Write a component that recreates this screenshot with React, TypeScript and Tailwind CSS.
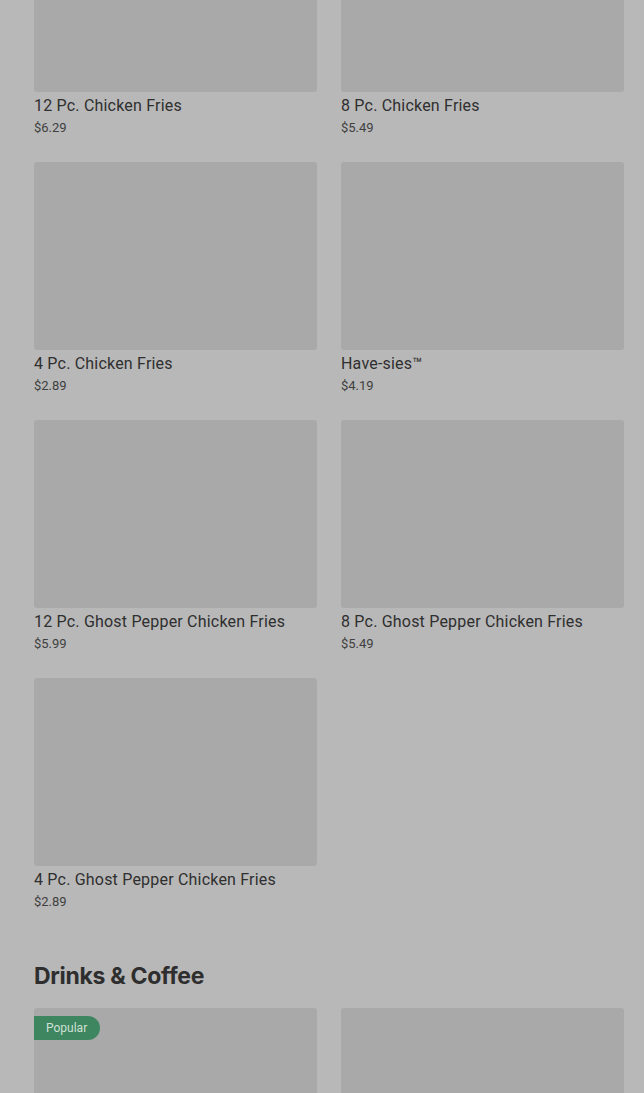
import React from "react";

type Item = { name: string; price: string; popular?: boolean };

const chickenFries: Item[] = [
  { name: "12 Pc. Chicken Fries", price: "$6.29" },
  { name: "8 Pc. Chicken Fries", price: "$5.49" },
  { name: "4 Pc. Chicken Fries", price: "$2.89" },
  { name: "Have-sies™", price: "$4.19" },
  { name: "12 Pc. Ghost Pepper Chicken Fries", price: "$5.99" },
  { name: "8 Pc. Ghost Pepper Chicken Fries", price: "$5.49" },
  { name: "4 Pc. Ghost Pepper Chicken Fries", price: "$2.89" },
];

function Thumb({ popular }: { popular?: boolean }) {
  return (
    <div className="relative h-[188px] rounded-[3px] bg-[#a9a9a9]">
      {popular && (
        <span className="absolute left-0 top-[8px] flex h-[24px] items-center rounded-r-full bg-[#3d8660] pl-[12px] pr-[13px] text-[12px] text-[#cfe0d5]">
          Popular
        </span>
      )}
    </div>
  );
}

function MenuCard({ item }: { item: Item }) {
  return (
    <div className="flex flex-col">
      <Thumb />
      <p className="pt-[3px] text-[16px] leading-[22px] font-normal tracking-[0.2px] text-[#2f2f2f]">{item.name}</p>
      <p className="pt-[1px] text-[13px] leading-[20px] text-[#404040]">{item.price}</p>
    </div>
  );
}

export default function App() {
  return (
    <div
      className="h-[1093px] overflow-hidden bg-[#b8b8b8]"
      style={{ fontFamily: "Roboto, 'Liberation Sans', sans-serif" }}
    >
      <div className="-mt-[96px] pl-[34px] pr-[20px]">
        <div className="grid grid-cols-2 gap-x-[24px] gap-y-[24px]">
          {chickenFries.map((item) => (
            <MenuCard key={item.name} item={item} />
          ))}
        </div>
        <h2
          className="mt-[49px] text-[23px] leading-[30px] font-bold tracking-[-0.3px] text-[#2e2e2e]"
          style={{ fontFamily: "Inter, Roboto, sans-serif" }}
        >
          Drinks &amp; Coffee
        </h2>
        <div className="mt-[17px] grid grid-cols-2 gap-x-[24px]">
          <Thumb popular />
          <Thumb />
        </div>
      </div>
    </div>
  );
}
